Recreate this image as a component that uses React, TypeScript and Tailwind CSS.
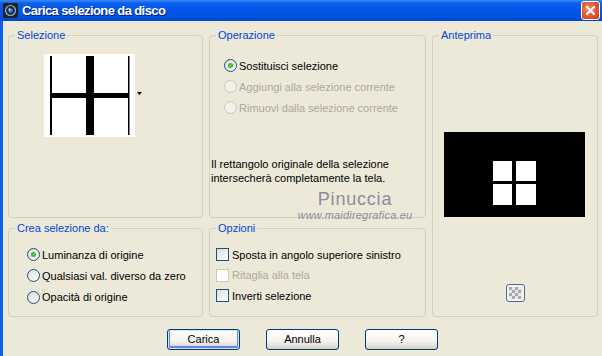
import React from "react";

const FONT = { fontFamily: '"Liberation Sans", Arial, sans-serif' };

function Group({
  label,
  className,
  children,
}: {
  label: string;
  className: string;
  children?: React.ReactNode;
}) {
  return (
    <div className={`relative border border-[#D0D0BF] rounded-[4px] shrink-0 ${className}`}>
      <span className="absolute left-[6px] top-[-8px] px-[2px] bg-[#ECE9D8] text-[11px] leading-[14px] text-[#0046D5]">
        {label}
      </span>
      {children}
    </div>
  );
}

function Radio({ checked, disabled }: { checked?: boolean; disabled?: boolean }) {
  return (
    <span
      className={`relative w-[13px] h-[13px] rounded-full border shrink-0 flex items-center justify-center ${
        disabled
          ? "border-[#CAC8BB] bg-[#F2F1EA]"
          : "border-[#1C5180] bg-[linear-gradient(135deg,#DCDCD7,#FFFFFF)]"
      }`}
    >
      {checked && (
        <span className="w-[5px] h-[5px] rounded-full bg-[radial-gradient(circle,#55D551,#21A121)]" />
      )}
    </span>
  );
}

function Check({ disabled }: { disabled?: boolean }) {
  return (
    <span
      className={`w-[13px] h-[13px] border shrink-0 ${
        disabled
          ? "border-[#CAC8BB] bg-white"
          : "border-[#1C5180] bg-[linear-gradient(135deg,#DCDCD7,#FFFFFF)]"
      }`}
    />
  );
}

function Btn({ children, def }: { children: React.ReactNode; def?: boolean }) {
  return (
    <div
      className={`w-[73px] h-[21px] rounded-[3px] border border-[#003C74] flex items-center justify-center text-[11px] text-black bg-[linear-gradient(180deg,#FFFFFF_0%,#F4F3EE_60%,#D6D0C5_100%)] ${
        def ? "shadow-[inset_0_0_0_1px_#CEE7FF,inset_0_-1px_0_2px_#6982EE]" : "shadow-[inset_0_-1px_0_0_#D6D0C5]"
      }`}
    >
      {children}
    </div>
  );
}

export default function App() {
  return (
    <div
      className="relative w-[602px] h-[356px] overflow-hidden bg-[#ECE9D8] flex flex-col"
      style={FONT}
    >
      {/* Title bar */}
      <div className="h-[21px] shrink-0 flex items-center bg-[linear-gradient(180deg,#3D8BF5_0%,#0A5FEE_15%,#0055E5_55%,#0050DD_85%,#0046D0_100%)]">
        <div className="ml-[3px] w-[15px] h-[15px] bg-[#222] rounded-[2px] flex items-center justify-center">
          <svg width="13" height="13" viewBox="0 0 13 13">
            <circle cx="6.5" cy="6.5" r="5" fill="#1d2a44" stroke="#8fb0d8" strokeWidth="1.2" />
            <circle cx="6.5" cy="6.5" r="2.2" fill="#4a7fc8" />
            <circle cx="5.5" cy="5.5" r="0.9" fill="#e0e8ff" />
          </svg>
        </div>
        <span className="ml-[4px] text-white text-[13px] font-bold tracking-[-0.6px] [text-shadow:1px_1px_0_#0A1E80]">
          Carica selezione da disco
        </span>
        <div className="ml-auto mr-[2px] w-[19px] h-[19px] rounded-[3px] border border-white bg-[radial-gradient(circle_at_40%_40%,#F08A6A,#E0502A_60%,#C8401F)] flex items-center justify-center">
          <svg width="11" height="11" viewBox="0 0 11 11">
            <path d="M2 2 L9 9 M9 2 L2 9" stroke="white" strokeWidth="2" strokeLinecap="square" />
          </svg>
        </div>
      </div>

      {/* Body */}
      <div className="flex flex-1">
        <div className="w-[3px] bg-[#0A5FEE] shrink-0" />
        <div className="pl-[5px] pt-[14px] flex flex-col">
          <div className="flex">
            <div className="flex flex-col">
              <div className="flex gap-[6px]">
                <Group label="Selezione" className="w-[195px] h-[183px]">
                  <div className="flex items-center ml-[35px] mt-[18px]">
                    <svg width="91" height="83" viewBox="0 0 91 83" className="bg-white">
                      <rect x="6" y="2" width="2" height="79" fill="black" />
                      <rect x="42" y="2" width="8" height="79" fill="black" />
                      <rect x="84" y="2" width="1.5" height="79" fill="black" />
                      <rect x="6" y="39" width="79" height="5" fill="black" />
                    </svg>
                    <svg width="6" height="4" viewBox="0 0 6 4" className="ml-[2px] mt-[-3px]">
                      <path d="M0 0 H5 L2.5 3 Z" fill="black" />
                    </svg>
                  </div>
                </Group>
                <Group label="Operazione" className="w-[217px] h-[183px]">
                  <div className="flex flex-col ml-[14px] mt-[19px] text-[11px] leading-[14px]">
                    <div className="flex items-center gap-[2px] h-[21px]">
                      <Radio checked />
                      <span className="text-black">Sostituisci selezione</span>
                    </div>
                    <div className="flex items-center gap-[2px] h-[21px]">
                      <Radio disabled />
                      <span className="text-[#ACA899]">Aggiungi alla selezione corrente</span>
                    </div>
                    <div className="flex items-center gap-[2px] h-[21px]">
                      <Radio disabled />
                      <span className="text-[#ACA899]">Rimuovi dalla selezione corrente</span>
                    </div>
                  </div>
                  <div className="ml-[1px] mt-[39px] text-[11px] leading-[14px] text-black">
                    Il rettangolo originale della selezione
                    <br />
                    intersecherà completamente la tela.
                  </div>
                </Group>
              </div>
              <div className="flex gap-[6px] mt-[10px]">
                <Group label="Crea selezione da:" className="w-[195px] h-[89px]">
                  <div className="flex flex-col ml-[18px] mt-[15px] text-[11px] leading-[14px] text-black">
                    <div className="flex items-center gap-[2px] h-[21px]">
                      <Radio checked />
                      <span>Luminanza di origine</span>
                    </div>
                    <div className="flex items-center gap-[2px] h-[21.5px]">
                      <Radio />
                      <span>Qualsiasi val. diverso da zero</span>
                    </div>
                    <div className="flex items-center gap-[2px] h-[21px]">
                      <Radio />
                      <span>Opacità di origine</span>
                    </div>
                  </div>
                </Group>
                <Group label="Opzioni" className="w-[217px] h-[89px]">
                  <div className="flex flex-col ml-[6px] mt-[15px] text-[11px] leading-[14px] text-black">
                    <div className="flex items-center gap-[3px] h-[21px]">
                      <Check />
                      <span>Sposta in angolo superiore sinistro</span>
                    </div>
                    <div className="flex items-center gap-[3px] h-[20.5px]">
                      <Check disabled />
                      <span className="text-[#ACA899]">Ritaglia alla tela</span>
                    </div>
                    <div className="flex items-center gap-[3px] h-[20.5px]">
                      <Check />
                      <span>Inverti selezione</span>
                    </div>
                  </div>
                </Group>
              </div>
            </div>
            <Group label="Anteprima" className="ml-[6px] w-[166px] h-[282px]">
              <div className="flex flex-col items-start">
                <svg
                  width="141"
                  height="85"
                  viewBox="0 0 141 85"
                  className="ml-[11px] mt-[96px] bg-black"
                >
                  <rect x="49" y="29" width="19" height="20" fill="white" />
                  <rect x="72" y="29" width="20" height="20" fill="white" />
                  <rect x="49" y="52" width="19" height="21" fill="white" />
                  <rect x="72" y="52" width="20" height="21" fill="white" />
                </svg>
                <div className="ml-[73px] mt-[67px] w-[19px] h-[18px] rounded-[3px] border border-[#4C6A92] bg-[#F4F3EE] flex items-center justify-center">
                  <svg width="13" height="12" viewBox="0 0 13 12">
                    <rect width="13" height="12" fill="#E8E8E8" />
                    <rect x="0" y="0" width="3" height="3" fill="#A9A9A9" />
                    <rect x="6" y="0" width="3" height="3" fill="#A9A9A9" />
                    <rect x="3" y="3" width="3" height="3" fill="#A9A9A9" />
                    <rect x="9" y="3" width="3" height="3" fill="#A9A9A9" />
                    <rect x="0" y="6" width="3" height="3" fill="#A9A9A9" />
                    <rect x="6" y="6" width="3" height="3" fill="#A9A9A9" />
                    <rect x="3" y="9" width="3" height="3" fill="#A9A9A9" />
                    <rect x="9" y="9" width="3" height="3" fill="#A9A9A9" />
                  </svg>
                </div>
              </div>
            </Group>
          </div>
          <div className="flex gap-[26px] ml-[159px] mt-[12px]">
            <Btn def>Carica</Btn>
            <Btn>Annulla</Btn>
            <Btn>?</Btn>
          </div>
        </div>
      </div>

      {/* Watermark */}
      <div className="absolute left-[293px] top-[190px] w-[124px] flex flex-col items-center pointer-events-none">
        <span
          className="text-[18px] leading-[18px] text-[#8C8C9E] tracking-[0.8px]"
          style={{ fontFamily: '"Liberation Sans", Arial, sans-serif' }}
        >
          Pinuccia
        </span>
        <span className="mt-[1px] text-[11px] leading-[12px] text-[#8C8C9E] italic tracking-[0.2px]">
          www.maidiregrafica.eu
        </span>
      </div>
    </div>
  );
}
